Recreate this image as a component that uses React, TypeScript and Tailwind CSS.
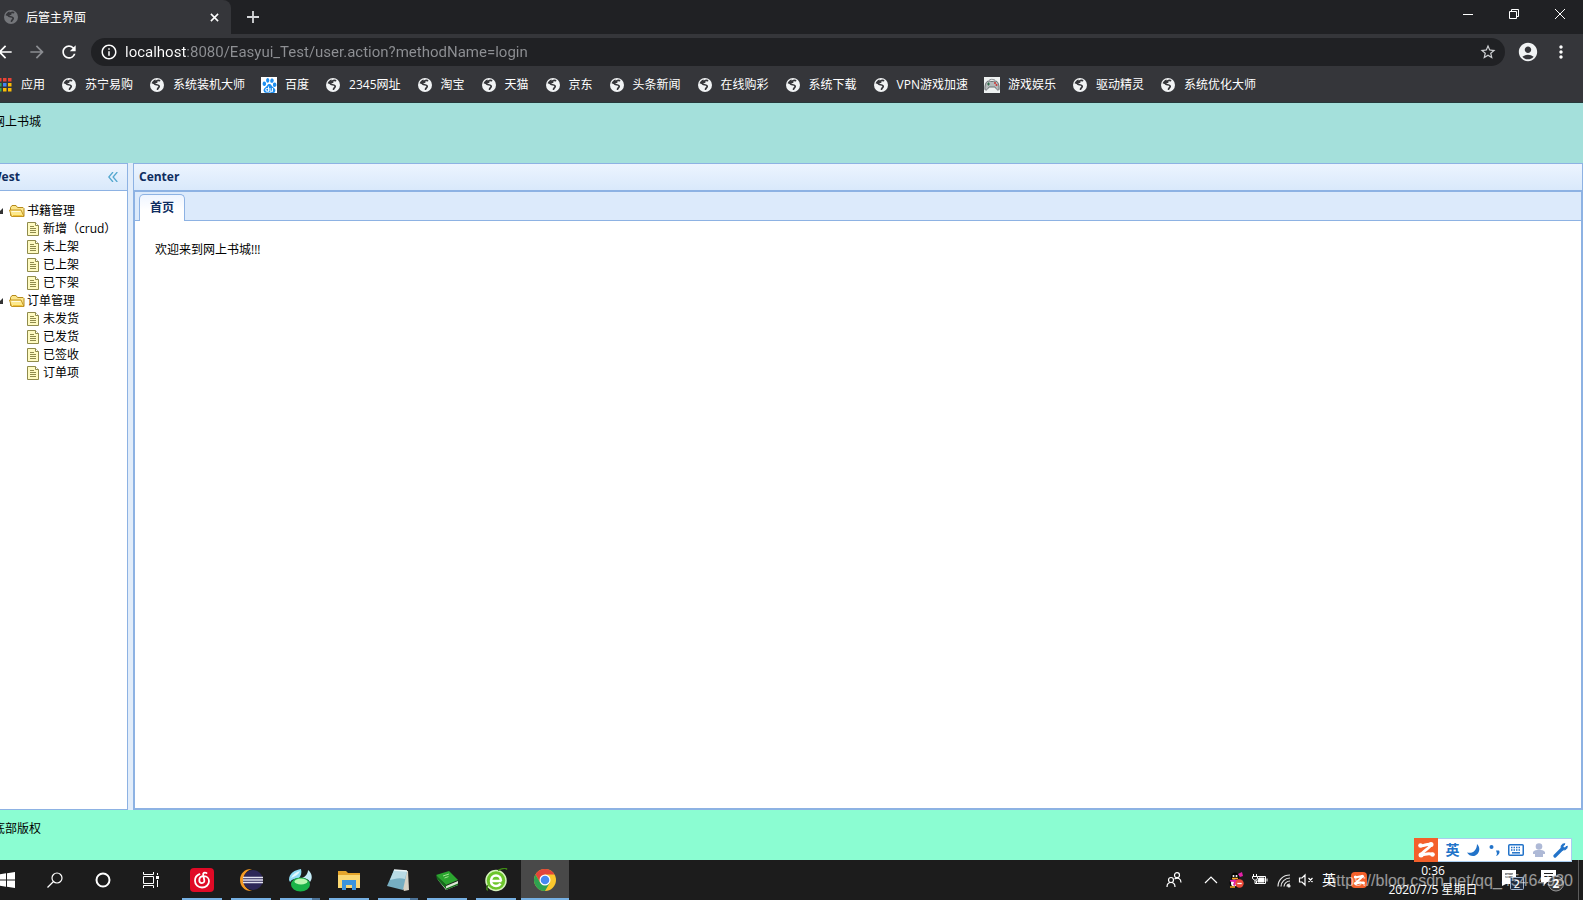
import { useState, type ReactNode } from "react";
import {
  MdAccountCircle,
  MdArrowBack,
  MdArrowForward,
  MdInfoOutline,
  MdMoreVert,
  MdRefresh,
  MdStarBorder,
} from "react-icons/md";
import { SiBaidu } from "react-icons/si";

interface Bookmark {
  title: string;
  icon?: "baidu" | "game";
}

interface TreeNode {
  text: string;
  children: string[];
}

const BOOKMARKS: Bookmark[] = [
  { title: "苏宁易购" },
  { title: "系统装机大师" },
  { title: "百度", icon: "baidu" },
  { title: "2345网址" },
  { title: "淘宝" },
  { title: "天猫" },
  { title: "京东" },
  { title: "头条新闻" },
  { title: "在线购彩" },
  { title: "系统下载" },
  { title: "VPN游戏加速" },
  { title: "游戏娱乐", icon: "game" },
  { title: "驱动精灵" },
  { title: "系统优化大师" },
];

const MENU: TreeNode[] = [
  { text: "书籍管理", children: ["新增（crud）", "未上架", "已上架", "已下架"] },
  { text: "订单管理", children: ["未发货", "已发货", "已签收", "订单项"] },
];

function GlobeIcon({ className }: { className?: string }) {
  return (
    <svg viewBox="0 0 16 16" className={className ?? "size-4 text-[#f1f3f4]"} aria-hidden>
      <circle cx="8" cy="8" r="7" fill="currentColor" />
      <path
        d="M10.500 3.600C8 3 7.200 4.200 7.400 5.200 5.500 5.200 5 6.500 6 7.300c1.200.7 3.600.2 4.200 1.700.4 1.300-1.200 1.500-1.700 3.200"
        fill="none"
        stroke="#35363a"
        strokeWidth="1.700"
        strokeLinecap="round"
      />
      <path d="M2.600 6.200C3.200 4.500 4.700 3 6.500 2.500L7.200 5 5 7.300z" fill="#35363a" />
    </svg>
  );
}

function GameIcon() {
  return (
    <svg viewBox="0 0 16 16" className="size-4" aria-hidden>
      <rect width="16" height="16" fill="#eef1f1" />
      <path d="M5 3.500c1-1.500 3-1.500 6-.5" stroke="#8b9094" fill="none" />
      <path d="M3 4.500c2-1 3 0 5 0s3-1 5 0c1.500 1.500 2.500 5 2 8-1 1.500-2.500 0-4-2.500H5C3.500 12.500 2 14 1 12.500c-.5-3 .5-6.500 2-8z" fill="#b4b9bb" stroke="#6b7073" />
      <path d="M3 7h3M4.500 5.500v3" stroke="#2f6b4a" />
      <circle cx="11" cy="6" r="1" fill="#cf2f2f" />
      <circle cx="12.500" cy="8" r="1" fill="#cf2f2f" />
    </svg>
  );
}

function BookmarkIcon({ icon }: { icon?: Bookmark["icon"] }) {
  if (icon === "baidu") {
    return (
      <span className="flex size-4 items-center justify-center bg-white text-[#1d8ff0]">
        <SiBaidu className="size-[15px]" />
      </span>
    );
  }
  if (icon === "game") return <GameIcon />;
  return <GlobeIcon />;
}

function AppsIcon() {
  const colors = ["#ea4335", "#ea4335", "#ea4335", "#34a853", "#4285f4", "#fbbc05", "#34a853", "#fbbc05", "#fbbc05"];
  return (
    <svg viewBox="0 0 16 16" className="size-4" aria-hidden>
      {colors.map((c, i) => (
        <rect key={i} x={1 + (i % 3) * 5} y={1 + Math.floor(i / 3) * 5} width="3.500" height="3.500" fill={c} />
      ))}
    </svg>
  );
}

function BrowserChrome() {
  return (
    <header className="border-b border-[#26393a] bg-[#35363a] text-white">
      <div className="flex h-[34px] bg-[#202124]">
        <div className="flex w-[231px] items-center rounded-tr-lg bg-[#35363a] pr-[9px] pl-[3px]">
          <GlobeIcon className="size-4 text-[#74767a]" />
          <span className="ml-[7px] flex-1 pt-[2px] text-xs">后管主界面</span>
          <button type="button" aria-label="关闭标签页" className="flex size-4 items-center justify-center">
            <svg viewBox="0 0 10 10" className="size-[9px]">
              <path d="M1 1l8 8M9 1l-8 8" stroke="#fff" strokeWidth="1.700" />
            </svg>
          </button>
        </div>
        <button type="button" aria-label="新标签页" className="ml-2 flex w-7 items-center justify-center">
          <svg viewBox="0 0 12 12" className="size-3">
            <path d="M6 0v12M0 6h12" stroke="#d5d7da" strokeWidth="1.800" />
          </svg>
        </button>
        <div className="ml-auto flex h-7">
          <button type="button" aria-label="最小化" className="flex w-[46px] items-center justify-center">
            <svg viewBox="0 0 10 10" className="size-[10px]">
              <path d="M0 5.500h10" stroke="#fff" />
            </svg>
          </button>
          <button type="button" aria-label="还原" className="flex w-[46px] items-center justify-center">
            <svg viewBox="0 0 10 10" className="size-[10px]" fill="none" stroke="#fff">
              <path d="M.5 2.500h7v7h-7zM2.500 2.500v-2h7v7h-2" />
            </svg>
          </button>
          <button type="button" aria-label="关闭" className="flex w-[46px] items-center justify-center">
            <svg viewBox="0 0 10 10" className="size-[10px]">
              <path d="M0 0l10 10M10 0L0 10" stroke="#fff" />
            </svg>
          </button>
        </div>
      </div>

      <div className="flex h-9 items-center pr-3">
        <div className="-ml-[5px] flex items-center gap-3">
          <button type="button" aria-label="后退">
            <MdArrowBack className="size-5" />
          </button>
          <button type="button" aria-label="前进" className="text-[#8b8d91]">
            <MdArrowForward className="size-5" />
          </button>
          <button type="button" aria-label="重新加载">
            <MdRefresh className="size-5" />
          </button>
        </div>
        <div className="ml-3 flex h-7 flex-1 items-center rounded-full bg-[#202124] pr-2 pl-[9px]">
          <MdInfoOutline className="size-[18px]" />
          <input
            type="text"
            aria-label="地址栏"
            defaultValue="localhost:8080/Easyui_Test/user.action?methodName=login"
            className="ml-[7px] h-7 min-w-0 flex-1 bg-[linear-gradient(to_right,#fff_61px,#8e9094_61px)] bg-clip-text font-['Roboto',sans-serif] text-[15px] text-transparent outline-none"
          />
          <button type="button" aria-label="添加书签" className="text-[#d0d2d5]">
            <MdStarBorder className="size-[18px]" />
          </button>
        </div>
        <button type="button" aria-label="用户" className="ml-3 text-[#f1f3f4]">
          <MdAccountCircle className="size-[22px]" />
        </button>
        <button type="button" aria-label="菜单" className="ml-3">
          <MdMoreVert className="size-5" />
        </button>
      </div>

      <nav className="-ml-[3px] flex h-8 items-center gap-4 overflow-hidden pb-[2px] text-xs whitespace-nowrap">
        <a href="#apps" className="flex items-center gap-2">
          <AppsIcon />
          应用
        </a>
        {BOOKMARKS.map((b) => (
          <a key={b.title} href="#bookmark" className="flex items-center gap-2">
            <BookmarkIcon icon={b.icon} />
            {b.title}
          </a>
        ))}
      </nav>
    </header>
  );
}

function FolderIcon() {
  return (
    <svg viewBox="0 0 18 18" className="size-[18px] shrink-0" aria-hidden>
      <path d="M1.500 13.500v-8l1.500-2h4l1.500 2h5.500l1 1v7.500z" fill="#fbe58a" stroke="#b58a1c" />
      <path d="M2.500 14.500l-2-6.500h11.500l3 6.500z" fill="#fde98c" stroke="#c39522" />
      <path d="M2.500 9.500h9" stroke="#fffbe0" />
      <path d="M4 13.500h9.500" stroke="#efc43a" />
    </svg>
  );
}

function FileIcon() {
  return (
    <svg viewBox="0 0 18 18" className="size-[18px] shrink-0" aria-hidden>
      <path d="M2.500 2.500h8l3 3v10h-11z" fill="#fffbc2" stroke="#8f8b4c" />
      <path d="M10.500 2.500v3h3" fill="#fff" stroke="#8f8b4c" />
      <path d="M5 6.500h4M5 8.500h6M5 10.500h6M5 12.500h6" stroke="#8f8b4c" />
    </svg>
  );
}

function Branch({ node }: { node: TreeNode }) {
  const [open, setOpen] = useState(true);

  return (
    <li>
      <button type="button" onClick={() => setOpen(!open)} className="flex h-[18px] items-center" aria-expanded={open}>
        <svg viewBox="0 0 16 18" className="h-[18px] w-4" aria-hidden>
          <path d="M10 6v6H4z" fill="#333" />
        </svg>
        <FolderIcon />
        {node.text}
      </button>
      {open && (
        <ul className="pl-8">
          {node.children.map((c) => (
            <li key={c}>
              <a href="#page" className="flex h-[18px] items-center whitespace-nowrap">
                <FileIcon />
                {c}
              </a>
            </li>
          ))}
        </ul>
      )}
    </li>
  );
}

function PanelHeader({ title, children }: { title: string; children?: ReactNode }) {
  return (
    <div className="flex h-[27px] items-center justify-between border-b border-[#8db2e3] bg-linear-to-b from-[#ecf4fe] to-[#d9e9fb] px-[5px]">
      <h2 className="text-xs font-bold text-[#0e2d5f]">{title}</h2>
      {children}
    </div>
  );
}

function Workspace() {
  return (
    <div className="flex min-h-0 flex-1 flex-col overflow-hidden bg-white text-xs text-black">
      <div className="-ml-3 h-[60px] shrink-0 bg-[#a4e0db] px-[5px] pt-[11px]">网上书城</div>
      <div className="-ml-4 flex min-h-0 flex-1 bg-[#e2edfa]">
        <aside className="flex w-36 flex-col border border-[#8db2e3] bg-white">
          <PanelHeader title="West">
            <button type="button" aria-label="折叠" className="mr-1">
              <svg viewBox="0 0 10 10" className="size-[10px]" fill="none" stroke="#55a8cf" strokeWidth="1.300">
                <path d="M5 0L.8 5 5 10M9.300 0L5.100 5l4.200 5" />
              </svg>
            </button>
          </PanelHeader>
          <ul className="mt-[11px] pl-2">
            {MENU.map((n) => (
              <Branch key={n.text} node={n} />
            ))}
          </ul>
        </aside>
        <main className="ml-[5px] flex min-w-0 flex-1 flex-col border border-[#8db2e3] bg-white">
          <PanelHeader title="Center" />
          <div className="flex flex-1 flex-col border border-[#8db2e3]">
            <div role="tablist" className="flex h-[29px] items-end border-b border-[#8db2e3] bg-[#dceafb] pl-1">
              <button
                type="button"
                role="tab"
                aria-selected
                className="-mb-px h-[27px] rounded-t-[5px] border border-b-0 border-[#8db2e3] bg-linear-to-b from-[#eff5ff] to-white to-60% px-[10px] font-bold text-[#0e2d5f]"
              >
                首页
              </button>
            </div>
            <div className="p-5 pt-[21px]">欢迎来到网上书城!!!</div>
          </div>
        </main>
      </div>
      <footer className="-ml-3 h-[50px] shrink-0 bg-[#8bfdd2] px-[5px] pt-[11px]">底部版权</footer>
    </div>
  );
}

function EclipseLogo() {
  return (
    <svg viewBox="0 0 24 24" className="size-6" aria-hidden>
      <path d="M13 1C6 .5 1 5.500 1 12s5 11.500 12 11C7 21 4.500 17 4.500 12S7 3 13 1z" fill="#f59a23" />
      <circle cx="14" cy="12" r="10" fill="#2e2758" />
      <path d="M4 9.500h20M4 12h20M4 14.500h20" stroke="#e4e3f0" strokeWidth="1.400" />
    </svg>
  );
}

function SwirlLogo() {
  return (
    <svg viewBox="0 0 24 24" className="size-6" aria-hidden>
      <path d="M1 12C1 5 7 2 13 1c1 4 0 7-2 9-3 0-7 1-9 4z" fill="#8edcf4" />
      <path d="M3 10c2-4 5-6 9-7-1 3-4 5-9 7z" fill="#e3f8fd" />
      <path d="M14 10c3-1 6-4 6-8 4 3 5 8 2 12-2-3-4-4-8-4z" fill="#c4ecf8" />
      <ellipse cx="12.500" cy="16.500" rx="9.500" ry="7" fill="#19b348" />
      <ellipse cx="13" cy="13.500" rx="6.500" ry="3" fill="#b9f7b0" />
    </svg>
  );
}

function ExplorerLogo() {
  return (
    <svg viewBox="0 0 24 24" className="size-6" aria-hidden>
      <path d="M1 3h8l2 2h12v4H1z" fill="#e5a52b" />
      <path d="M1 7h22v13H1z" fill="#fbd873" />
      <path d="M5 12h14v10h-4v-5H9v5H5z" fill="#3b94dc" />
    </svg>
  );
}

function NotepadLogo() {
  return (
    <svg viewBox="0 0 24 24" className="size-6" aria-hidden>
      <path d="M8 2l14 1 1 19-5 1z" fill="#d8d2c4" />
      <path d="M8 2l13 1-4 19L1 18z" fill="#76aec2" />
      <path d="M8 2l13 1-2 8C13 9 8 11 4 12z" fill="#b9dbe5" />
      <path d="M8 2l13 1" stroke="#eef6f8" strokeWidth="1.500" />
    </svg>
  );
}

function BookLogo() {
  return (
    <svg viewBox="0 0 24 24" className="size-6" aria-hidden>
      <path d="M2 8l9 10 12-5v4l-12 5L3 12z" fill="#d9e6d2" />
      <path d="M1 7l13-4 9 9-12 5z" fill="#2ba52f" />
      <path d="M1 7l10 10v4L2 11zM11 20.500l12-5V17l-12 5z" fill="#136d1a" />
      <path d="M8 8l6-2M9.500 10l4-1.400" stroke="#9fe28f" />
    </svg>
  );
}

function GreenBrowserLogo() {
  return (
    <svg viewBox="0 0 24 24" className="size-6" aria-hidden>
      <circle cx="12" cy="12.500" r="10" fill="#6cc52b" stroke="#d5f3bd" strokeWidth="1.500" />
      <path d="M17.500 13H7M17 13c0-3-2-5.500-5-5.500S7 10 7 13s2 5 5 5c2 0 3.500-.7 4.500-2.300" fill="none" stroke="#fff" strokeWidth="2.500" />
      <path d="M4 22c-2 0-1-3 0-5M14 2.500c4-2 8-2.500 9-1" fill="none" stroke="#3f8a15" strokeWidth="1.500" />
    </svg>
  );
}

function ChromeLogo() {
  return (
    <svg viewBox="0 0 24 24" className="size-6" aria-hidden>
      <circle cx="12" cy="12" r="11" fill="#fbc72d" />
      <path d="M2.470 6.500A11 11 0 0 1 21.530 6.500H12L7.200 14.800z" fill="#e2453a" />
      <path d="M2.470 6.500A11 11 0 0 0 12 23l4.800-8.300H7.200z" fill="#2fa250" />
      <circle cx="12" cy="12" r="5.500" fill="#fff" />
      <circle cx="12" cy="12" r="4.300" fill="#4688f1" />
    </svg>
  );
}

function SogouLogo({ className }: { className: string }) {
  return (
    <svg viewBox="0 0 24 24" className={className} aria-hidden>
      <rect width="24" height="24" fill="#f4602b" />
      <path
        d="M6.500 7.500c3.500 1 6-2 10.500-1-1 4-8 6-10 10.500 4 0 6.500-2.500 12-.5"
        fill="none"
        stroke="#fff"
        strokeWidth="3"
        strokeLinecap="round"
        strokeLinejoin="round"
      />
      <circle cx="6.500" cy="7.500" r="2.300" fill="#fff" />
      <circle cx="17" cy="6.500" r="2.500" fill="#fff" />
      <circle cx="7" cy="17" r="2.500" fill="#fff" />
      <circle cx="18.500" cy="16.500" r="2.200" fill="#fff" />
    </svg>
  );
}

function NeteaseLogo() {
  return (
    <svg viewBox="0 0 24 24" className="size-6" aria-hidden>
      <rect width="24" height="24" rx="4" fill="#e00a26" />
      <path
        d="M9.500 6.200C6.500 7.300 5 9.800 5 12.700 5 16.700 8.200 19.500 12 19.500s7-2.600 7-6.300c0-3-2.300-5-5-5-2.800 0-4.700 1.700-4.700 4 0 1.700 1.100 2.900 2.600 2.900 1.700 0 2.700-1.200 2.400-2.900L13.200 7c-.4-2 1.300-3 3.300-2"
        fill="none"
        stroke="#fff"
        strokeWidth="1.800"
        strokeLinecap="round"
      />
    </svg>
  );
}

const TASKS = [
  { name: "网易云音乐", logo: <NeteaseLogo /> },
  { name: "Eclipse", logo: <EclipseLogo /> },
  { name: "Navicat", logo: <SwirlLogo />, stacked: true },
  { name: "文件资源管理器", logo: <ExplorerLogo /> },
  { name: "记事本", logo: <NotepadLogo />, stacked: true },
  { name: "词典", logo: <BookLogo /> },
  { name: "浏览器", logo: <GreenBrowserLogo /> },
];

function SystemButton({ label, children }: { label: string; children: ReactNode }) {
  return (
    <button type="button" aria-label={label} className="flex w-12 items-center justify-center">
      {children}
    </button>
  );
}

function TrayIcons() {
  return (
    <div className="flex items-center text-white">
      <button type="button" aria-label="人脉" className="mr-[22px]">
        <svg viewBox="0 0 16 16" className="size-4" fill="none" stroke="#fff" strokeWidth="1.200">
          <circle cx="5" cy="8" r="2.500" />
          <path d="M1 15c0-6 8-6 8 0" />
          <circle cx="11" cy="3.200" r="2.500" />
          <path d="M8.500 7c3-2 6.500-.5 6.500 3.500" />
        </svg>
      </button>
      <button type="button" aria-label="显示隐藏的图标" className="mr-[10px]">
        <svg viewBox="0 0 14 14" className="size-[14px]" fill="none" stroke="#fff" strokeWidth="1.200">
          <path d="M1 10l6-6 6 6" />
        </svg>
      </button>
      <button type="button" aria-label="QQ" className="mr-2">
        <svg viewBox="0 0 16 16" className="size-4">
          <ellipse cx="7" cy="5" rx="4" ry="4.500" fill="#050505" />
          <ellipse cx="7" cy="11" rx="5.500" ry="4.500" fill="#050505" />
          <ellipse cx="6" cy="11" rx="3" ry="3.500" fill="#fff" />
          <path d="M2 8l9-.5v2l-3 .5-1 4-2-1 1-3-4-.5zM10 2l4-2 1 4-3 1z" fill="#e321a8" />
          <circle cx="5.500" cy="4" r="1" fill="#fff" />
          <circle cx="8.500" cy="4" r="1" fill="#fff" />
          <path d="M4 6.500h6M2 15h5" stroke="#f6a91f" strokeWidth="1.500" />
          <circle cx="11.500" cy="11.500" r="4.200" fill="#ec4b3a" />
          <path d="M9.300 11.500h4.400" stroke="#fff" strokeWidth="1.300" />
        </svg>
      </button>
      <button type="button" aria-label="电池" className="mr-2">
        <svg viewBox="0 0 16 16" className="size-4" fill="none" stroke="#fff">
          <path d="M5.500 4.500h8v7h-9v-3M15 6.500v3" />
          <path d="M7 6h5v4H6V8z" fill="#fff" />
          <path d="M1.500 2v2M4.500 2v2M.5 4.500h5v2l-2 1.500h-1l-2-1.500zM3 8v3.500h2" />
        </svg>
      </button>
      <button type="button" aria-label="网络" className="mr-[6px]">
        <svg viewBox="0 0 16 16" className="size-4" fill="none" stroke="#e5e5e5" strokeWidth="1.200">
          <path d="M2 14.500C2 8 7 3 14 3M5 14.500C5 10 9 6 14 6M8 14.500c0-3 3-5.500 6-5.500M11 14.500c0-1.500 1.500-2.500 3-2.500" />
          <circle cx="13" cy="14" r="1" fill="#fff" />
        </svg>
      </button>
      <button type="button" aria-label="音量" className="mr-2">
        <svg viewBox="0 0 16 16" className="size-4" fill="none" stroke="#fff" strokeWidth="1.200">
          <path d="M1.500 6h2.500l3-3v10l-3-3H1.500zM10.500 6l4 4M14.500 6l-4 4" />
        </svg>
      </button>
      <button type="button" className="mr-[15px] text-sm">
        英
      </button>
      <button type="button" aria-label="搜狗输入法" className="mr-[18px]">
        <SogouLogo className="size-4 rounded-sm" />
      </button>
    </div>
  );
}

function Taskbar() {
  return (
    <div className="relative flex h-10 shrink-0 bg-[#1c1c1c] text-white">
      <div className="-ml-[17px] flex">
        <SystemButton label="开始">
          <svg viewBox="0 0 16 16" className="size-4" fill="#fff">
            <path d="M0 2.300l7-1v6.200H0zM8 1.200L16 0v7.500H8zM0 8.500h7v6.200l-7-1zM8 8.500h8V16l-8-1.200z" />
          </svg>
        </SystemButton>
        <SystemButton label="搜索">
          <svg viewBox="0 0 16 16" className="size-4" fill="none" stroke="#fff" strokeWidth="1.200">
            <circle cx="10" cy="6" r="5" />
            <path d="M6.500 9.500L.5 15.500" />
          </svg>
        </SystemButton>
        <SystemButton label="Cortana">
          <svg viewBox="0 0 16 16" className="size-4" fill="none" stroke="#fff" strokeWidth="2">
            <circle cx="8" cy="8" r="6.500" />
          </svg>
        </SystemButton>
        <SystemButton label="任务视图">
          <svg viewBox="0 0 16 16" className="size-4" fill="none" stroke="#fff">
            <path d="M.5 0v2.500h10V0M.5 4.500h10v7H.5zM.5 16v-2.500h10V16M14.500 1v2M14.500 8v7" />
            <path d="M13 4h3v3h-3z" fill="#fff" stroke="none" />
          </svg>
        </SystemButton>
      </div>
      <div className="ml-[3px] flex gap-px">
        {TASKS.map((t) => (
          <button
            key={t.name}
            type="button"
            aria-label={t.name}
            className="flex w-12 flex-col items-center justify-end gap-[6px]"
          >
            {t.logo}
            <span className="flex h-[2px] w-10 justify-end bg-[#76b0e3]">
              {t.stacked && <span className="h-[2px] w-2 bg-[#4d7499]" />}
            </span>
          </button>
        ))}
        <button
          type="button"
          aria-label="Google Chrome"
          className="flex w-12 flex-col items-center justify-end gap-[6px] bg-[#494949]"
        >
          <ChromeLogo />
          <span className="h-[2px] w-full bg-[#76b0e3]" />
        </button>
      </div>

      <div className="ml-auto flex items-center">
        <TrayIcons />
        <div className="flex w-[96px] flex-col items-center text-xs leading-[19px]">
          <time>0:36</time>
          <time dateTime="2020-07-05">2020/7/5 星期日</time>
        </div>
        <button type="button" aria-label="便笺" className="ml-5">
          <svg viewBox="0 0 24 24" className="size-6">
            <path d="M1 2h14v14H5l-4 2z" fill="#fff" />
            <path d="M4 6h8M4 9h8" stroke="#1c1c1c" />
            <rect x="9.500" y="9.500" width="13" height="12" rx="1" fill="#1f2c40" stroke="#9fb2cc" />
            <text x="16" y="19.500" textAnchor="middle" fontSize="11" fill="#fff">2</text>
          </svg>
        </button>
        <button type="button" aria-label="操作中心" className="ml-[15px]">
          <svg viewBox="0 0 24 24" className="size-6">
            <path d="M1 2h15v12H7l-3 3v-3H1z" fill="#fff" />
            <path d="M4 5.500h9M4 8.500h9" stroke="#1c1c1c" />
            <circle cx="16" cy="15.500" r="7.500" fill="#3a3a3a" stroke="#9a9a9a" />
            <text x="16" y="20" textAnchor="middle" fontSize="12" fontWeight="bold" fill="#fff">2</text>
          </svg>
        </button>
        <span className="mr-1 ml-[14px] h-10 w-px bg-[#5c5c5c]" />
      </div>

      <p className="pointer-events-none absolute right-[10px] bottom-[7px] font-['Liberation_Sans',sans-serif] text-base text-white/55">
        https://blog.csdn.net/qq_45464930
      </p>

      {/* floating input method bar */}
      <div className="absolute right-[11px] bottom-[38px] flex h-6 w-[158px] items-center justify-between border border-l-0 border-[#a9cdf0] bg-white pr-[2px] text-[#2273c9]">
        <SogouLogo className="size-6" />
        <span className="text-sm font-bold">英</span>
        <svg viewBox="0 0 14 14" className="size-[14px]" fill="currentColor">
          <path d="M10 1c5 5 1 12-4 12-2.500 0-4.500-1-6-3.500C6 11 10 7 10 1z" />
        </svg>
        <svg viewBox="0 0 12 14" className="h-[14px] w-3" fill="currentColor">
          <circle cx="2.500" cy="4" r="2" />
          <path d="M7 7.500h3c1.500 2-.5 5-3 5.500 1.500-2 1-3 0-5.500z" />
        </svg>
        <svg viewBox="0 0 16 12" className="h-3 w-4" fill="none" stroke="currentColor">
          <rect x=".75" y=".75" width="14.500" height="10.500" rx="1" strokeWidth="1.500" />
          <path d="M3 3.500h10M3 6h10" strokeWidth="1.500" strokeDasharray="1.500 1" />
          <path d="M4 8.800h8" strokeWidth="1.500" />
        </svg>
        <svg viewBox="0 0 14 14" className="size-[14px]" fill="#aeb9d6">
          <circle cx="7" cy="3.500" r="3.300" />
          <path d="M1 9c2-3 10-3 12 0v2h-2v3H3v-3H1z" />
        </svg>
        <svg viewBox="0 0 16 16" className="size-4" fill="none" stroke="currentColor">
          <path d="M2 14l7-7" strokeWidth="3.200" strokeLinecap="round" />
          <path d="M12 1.800C8 1.500 7.500 5 8.700 7.300c2.300 1.200 5.800.7 5.500-3.300L11.500 6 10 4.500z" fill="currentColor" />
        </svg>
      </div>
    </div>
  );
}

export default function App() {
  return (
    <div className="flex h-screen flex-col overflow-hidden font-['Open_Sans','Noto_Sans_CJK_SC',sans-serif]">
      <BrowserChrome />
      <Workspace />
      <Taskbar />
    </div>
  );
}
